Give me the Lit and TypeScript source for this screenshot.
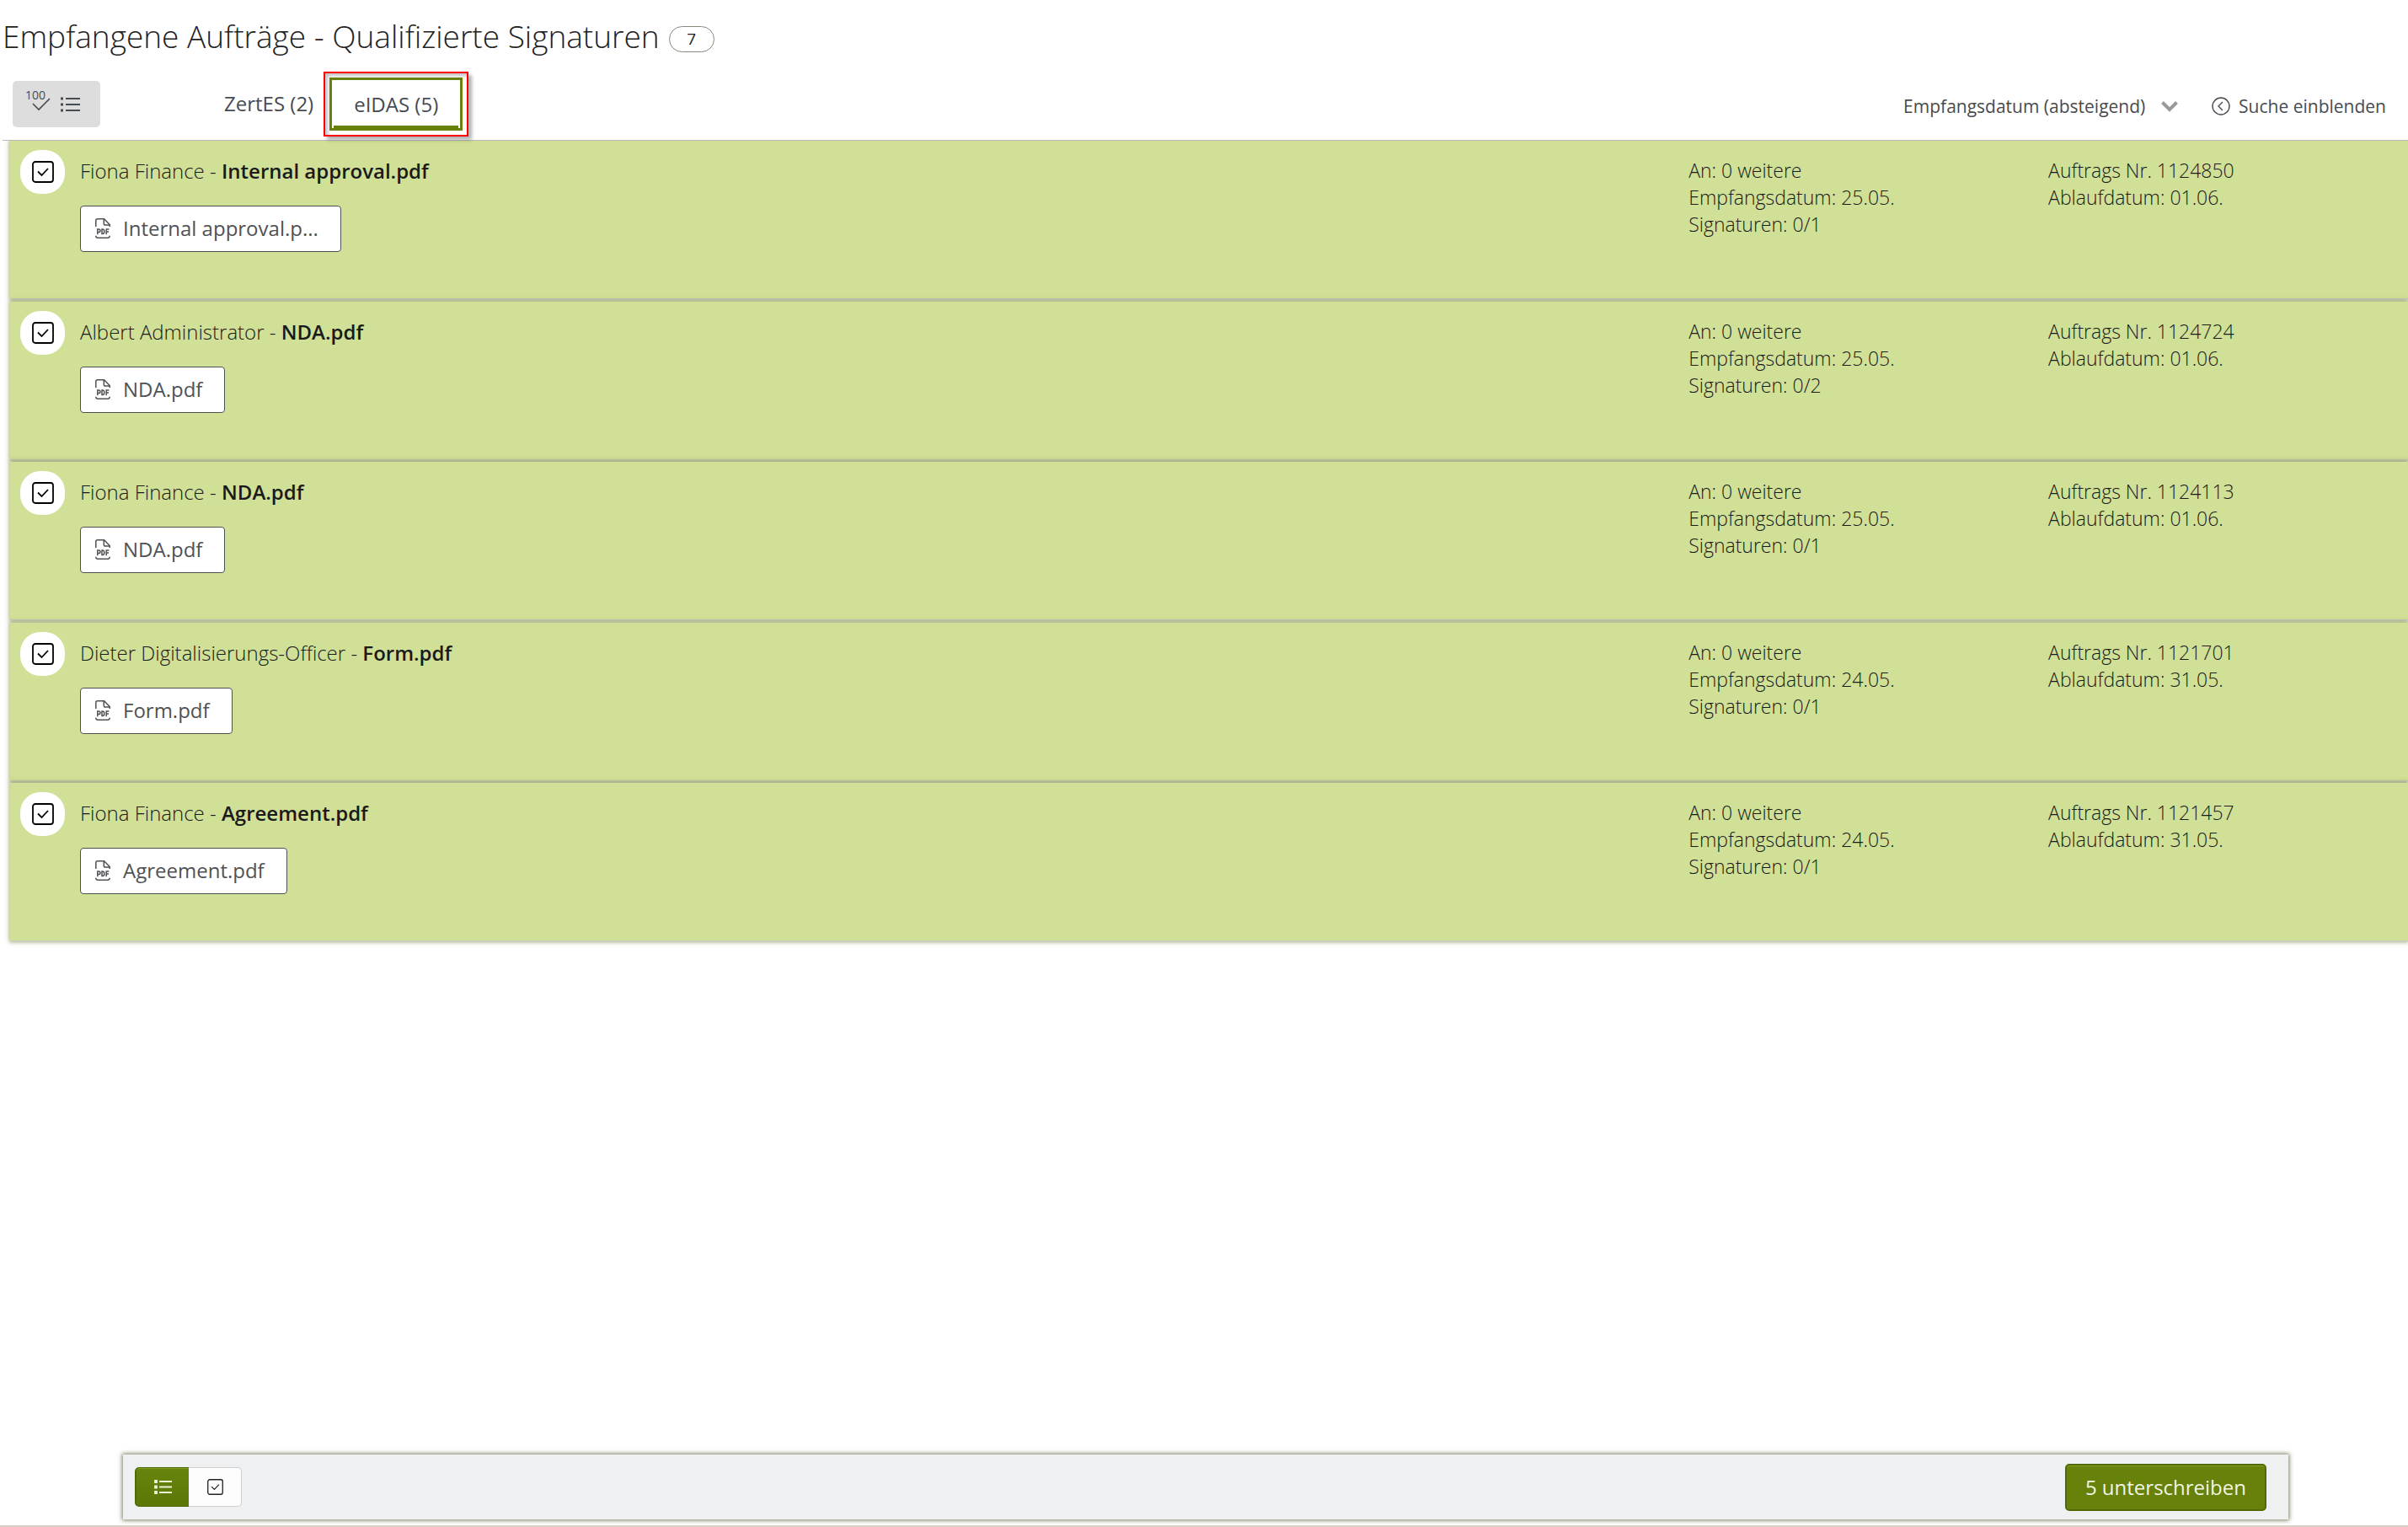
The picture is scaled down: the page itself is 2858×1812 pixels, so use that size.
import { LitElement, html, css, svg } from "lit";
import { customElement, property, state } from "lit/decorators.js";

interface Order {
  id: string;
  sender: string;
  file: string;
  received: string;
  expires: string;
  signatures: string;
}

const ORDERS: Order[] = [
  { id: "1124850", sender: "Fiona Finance", file: "Internal approval.pdf", received: "25.05.", expires: "01.06.", signatures: "0/1" },
  { id: "1124724", sender: "Albert Administrator", file: "NDA.pdf", received: "25.05.", expires: "01.06.", signatures: "0/2" },
  { id: "1124113", sender: "Fiona Finance", file: "NDA.pdf", received: "25.05.", expires: "01.06.", signatures: "0/1" },
  { id: "1121701", sender: "Dieter Digitalisierungs-Officer", file: "Form.pdf", received: "24.05.", expires: "31.05.", signatures: "0/1" },
  { id: "1121457", sender: "Fiona Finance", file: "Agreement.pdf", received: "24.05.", expires: "31.05.", signatures: "0/1" },
];

const MAX_LABEL = 19;
const shorten = (name: string) =>
  name.length > MAX_LABEL ? `${name.slice(0, MAX_LABEL)}...` : name;

const checkIcon = svg`
  <svg class="check-icon" viewBox="0 0 26 26" width="26" height="26" fill="none" stroke="currentColor" stroke-width="1.8" aria-hidden="true">
    <rect x="1" y="1" width="24" height="24" rx="3" />
    <path class="tick" d="M7 12.5l4.500 4.500L19 9" />
  </svg>`;

const pdfIcon = html`
  <svg viewBox="0 0 18 24" width="18" height="24" fill="none" stroke="currentColor" stroke-width="1.5" aria-hidden="true">
    <path d="M.8 10V2.6Q.8.8 2.6.8H10.600L17.200 7.600V10" />
    <path d="M10.300 1V6.200Q10.300 8 12 8H17" />
    <path d="M.8 20.800Q.8 23.200 3 23.200H15Q17.200 23.200 17.200 20.800" />
    <path d="M2.800 19.300V13H4.200Q6 13 6 14.800T4.200 16.600H3" />
    <path d="M8 13V18.600H8.800Q10.800 18.600 10.800 15.800T8.800 13Z" />
    <path d="M13.200 19.300V13H16.400M13.200 15.900H16" />
  </svg>`;

@customElement("order-row")
export class OrderRow extends LitElement {
  @property({ attribute: false }) order!: Order;

  static styles = css`
    :host {
      display: grid;
      grid-template-columns: 70% 15% 15%;
      align-items: start;
      box-sizing: border-box;
      padding: 11px 0 55px;
      border-bottom: 1px solid #c9cbc9;
      background: #d0e096;
      box-shadow: 0 0 5px 1px rgba(85, 105, 15, 0.55);
      color: #1a1a1a;
      font-weight: 300;
      font-size: 24px;
      line-height: 31px;
    }
    .main {
      display: flex;
      gap: 18px;
      padding-left: 12px;
    }
    .toggle {
      display: grid;
      place-items: center;
      width: 53px;
      height: 52px;
      border-radius: 24px;
      background: #fff;
      color: #000;
      cursor: pointer;
    }
    .toggle input,
    .toggle svg {
      grid-area: 1 / 1;
    }
    .toggle input {
      margin: 0;
      width: 26px;
      height: 26px;
      opacity: 0;
    }
    .toggle input:not(:checked) + svg .tick {
      display: none;
    }
    .body {
      display: flex;
      flex-direction: column;
      align-items: flex-start;
      gap: 26px;
      padding-top: 9px;
    }
    .title {
      margin: 0;
      font-size: 24px;
      font-weight: 300;
    }
    .title strong {
      font-weight: 600;
    }
    .file {
      display: flex;
      align-items: center;
      gap: 15px;
      box-sizing: border-box;
      min-height: 55px;
      padding: 0 26px 2px 17px;
      border: 1px solid #4c4f54;
      border-radius: 4px;
      background: #fff;
      color: #505255;
      font: inherit;
      font-weight: 400;
    }
    .meta {
      margin: 0;
      padding-top: 8px;
      font-size: 23px;
      line-height: 32px;
    }
  `;

  render() {
    const o = this.order;
    const id = `pick-${o.id}`;
    return html`
      <div class="main">
        <label class="toggle" for=${id}>
          <input id=${id} type="checkbox" checked aria-label=${`${o.sender} - ${o.file}`} />
          ${checkIcon}
        </label>
        <div class="body">
          <h2 class="title">${o.sender} - <strong>${o.file}</strong></h2>
          <button class="file" type="button">${pdfIcon}<span>${shorten(o.file)}</span></button>
        </div>
      </div>
      <p class="meta">An: 0 weitere<br />Empfangsdatum: ${o.received}<br />Signaturen: ${o.signatures}</p>
      <p class="meta">Auftrags Nr. ${o.id}<br />Ablaufdatum: ${o.expires}</p>
    `;
  }
}

@customElement("app-root")
export class AppRoot extends LitElement {
  @state() private tab = "eidas";

  static styles = css`
    :host {
      display: flex;
      flex-direction: column;
      box-sizing: border-box;
      min-height: 100vh;
      background: #fff;
      color: #474b52;
      font-family: "Open Sans", sans-serif;
      border-bottom: 2px solid #d8cfc4;
    }
    button,
    select {
      font-family: inherit;
      cursor: pointer;
    }
    .head {
      display: flex;
      align-items: center;
      gap: 11px;
      padding: 16px 3px 0;
      color: #222;
    }
    .head h1 {
      margin: 0;
      font-size: 37px;
      line-height: 54px;
      font-weight: 300;
    }
    .count {
      box-sizing: border-box;
      min-width: 54px;
      margin-top: 7px;
      border: 1px solid #8a8a7c;
      border-radius: 16px;
      font-size: 19px;
      line-height: 29px;
      text-align: center;
    }
    .bar {
      position: relative;
      z-index: 1;
      display: flex;
      align-items: center;
      min-height: 97px;
      margin-left: 3px;
      padding: 0 26px 0 12px;
      box-sizing: border-box;
      border-bottom: 1px solid #b9b9c1;
      background: #fff;
    }
    .mode {
      display: flex;
      box-sizing: border-box;
      width: 104px;
      height: 55px;
      margin-top: 10px;
      padding: 10px 15px;
      border: 0;
      border-radius: 5px;
      background: #ddd;
      color: #474b52;
    }
    .mode svg {
      overflow: visible;
    }
    .mode text {
      font-family: "Open Sans", sans-serif;
      font-size: 14px;
    }
    .tabs {
      display: flex;
      align-items: center;
      gap: 12px;
      margin: 10px 0 0 147px;
    }
    .tab {
      border: 0;
      padding: 0;
      background: none;
      color: inherit;
      font-size: 24px;
      line-height: 32px;
    }
    .ring {
      display: flex;
      padding: 5px;
      border: 2px solid #f00;
      box-shadow: 4px 4px 4px rgba(0, 0, 0, 0.3), inset 3px 3px 4px rgba(0, 0, 0, 0.25);
    }
    .ring .tab {
      padding: 13px 26px 12px;
      border: 3px solid #67810b;
      background: #fff;
      box-shadow: inset 2px 0 #fff, inset -2px 0 #fff, inset 0 -3px #67810b;
    }
    .tools {
      display: flex;
      align-items: center;
      gap: 40px;
      margin: 15px 0 0 auto;
      font-size: 21px;
      line-height: 30px;
    }
    .sort {
      display: flex;
      align-items: center;
      gap: 18px;
      color: #4a4a4a;
    }
    .sort select {
      appearance: none;
      padding: 0;
      border: 0;
      background: none;
      color: inherit;
      font-size: 21px;
      line-height: 30px;
    }
    .search {
      display: flex;
      align-items: center;
      gap: 10px;
      padding: 0;
      border: 0;
      background: none;
      color: inherit;
      font-size: 21px;
      line-height: 30px;
    }
    .list {
      display: flex;
      flex-direction: column;
      gap: 3px;
      margin: 0 0 0 12px;
      padding: 0;
      list-style: none;
    }
    .list li:nth-child(even) {
      margin-bottom: -1px;
    }
    .foot {
      display: flex;
      align-items: center;
      justify-content: space-between;
      box-sizing: border-box;
      min-height: 77px;
      margin: auto 142px 7px 146px;
      padding: 0 26px 0 14px;
      background: #eff0f2;
      box-shadow: 0 0 5px 1px rgba(70, 80, 40, 0.75);
    }
    .views {
      display: flex;
    }
    .views button {
      display: grid;
      place-items: center;
      box-sizing: border-box;
      width: 63px;
      height: 47px;
      padding: 0;
      border: 1px solid #cfcfcf;
      border-left: 0;
      border-radius: 0 5px 5px 0;
      background: #fdfdfd;
      color: #222;
    }
    .views .on {
      width: 64px;
      border: 1px solid #4f6a08;
      border-right: 0;
      border-left-width: 2px;
      border-radius: 5px 0 0 5px;
      background: linear-gradient(#67850d, #5b7707);
      box-shadow: inset 0 1px #7d9a23;
      color: #eef3d8;
    }
    .views .check-icon {
      width: 19px;
      height: 19px;
    }
    .sign {
      padding: 10px 22px;
      border: 2px solid #506a06;
      border-radius: 5px;
      background: #67810b;
      box-shadow: inset 0 1px #84a01f;
      color: #f1f5e2;
      font-size: 24px;
      line-height: 32px;
    }
  `;

  render() {
    return html`
      <header class="head">
        <h1>Empfangene Aufträge - Qualifizierte Signaturen</h1>
        <span class="count">7</span>
      </header>
      <nav class="bar">
        <button class="mode" type="button" aria-label="100 auswählen">
          <svg viewBox="0 0 74 34" width="74" height="34" fill="none" stroke="currentColor" stroke-width="1.6" aria-hidden="true">
            <text x="0" y="12" fill="currentColor" stroke="none">100</text>
            <path d="M9 17l7 7L29 11" />
            <path d="M48 11H65M48 18H65M48 25H65" stroke-width="1.8" />
            <path d="M42 11h3M42 18h3M42 25h3" stroke-width="3" />
          </svg>
        </button>
        <div class="tabs">
          <button class="tab" type="button" @click=${() => (this.tab = "zertes")}>ZertES (2)</button>
          <div class="ring">
            <button class="tab" type="button" @click=${() => (this.tab = "eidas")}>eIDAS (5)</button>
          </div>
        </div>
        <div class="tools">
          <label class="sort">
            <select aria-label="Sortierung">
              <option>Empfangsdatum (absteigend)</option>
            </select>
            <svg viewBox="0 0 20 14" width="20" height="14" fill="none" stroke="#999" stroke-width="4" aria-hidden="true">
              <path d="M1.500 2.500L10 11L18.500 2.500" />
            </svg>
          </label>
          <button class="search" type="button">
            <svg viewBox="0 0 22 22" width="22" height="22" fill="none" stroke="currentColor" stroke-width="1.4" aria-hidden="true">
              <circle cx="11" cy="11" r="10" />
              <path d="M13 6L8 11L13 16" />
            </svg>
            Suche einblenden
          </button>
        </div>
      </nav>
      <ul class="list">
        ${ORDERS.map((o) => html`<li><order-row .order=${o}></order-row></li>`)}
      </ul>
      <footer class="foot">
        <div class="views">
          <button class="on" type="button" aria-label="Liste">
            <svg viewBox="0 0 21 19" width="21" height="19" fill="none" stroke="currentColor" stroke-width="1.8" aria-hidden="true">
              <path d="M6 3H21M6 9.500H21M6 16H21" />
              <path d="M1 2h2v2H1zM1 8.500h2v2H1zM1 15h2v2H1z" />
            </svg>
          </button>
          <button type="button" aria-label="Auswahl">${checkIcon}</button>
        </div>
        <button class="sign" type="button">5 unterschreiben</button>
      </footer>
    `;
  }
}
